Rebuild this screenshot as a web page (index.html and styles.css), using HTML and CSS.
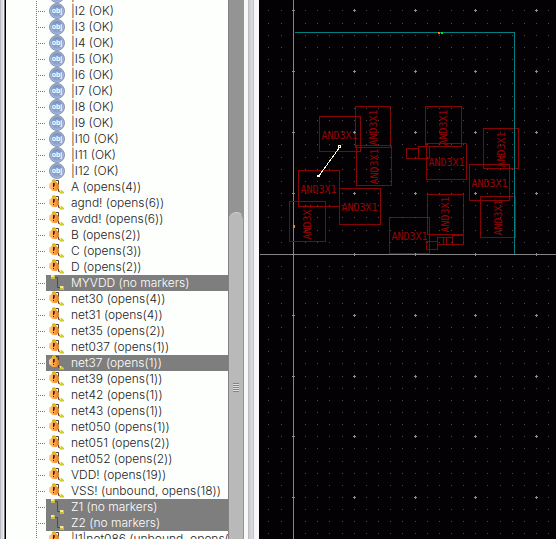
FILE: index.html
```
<!DOCTYPE html>
<html lang="en">
<head>
<meta charset="utf-8">
<title>Layout nets</title>
<link rel="stylesheet" href="styles.css">
</head>
<body>
<svg class="defs" aria-hidden="true">
  <defs>
    <radialGradient id="orb" cx="50%" cy="70%" r="65%"><stop offset="0" stop-color="#8fa5d3"/><stop offset=".7" stop-color="#869bc8"/><stop offset="1" stop-color="#6b7fa9"/></radialGradient>
    <linearGradient id="amber" x2="1" y2="0"><stop offset="0" stop-color="#ffcf90"/><stop offset=".5" stop-color="#fba640"/><stop offset="1" stop-color="#d98034"/></linearGradient>
    <symbol id="obj" viewBox="0 0 16 16">
      <circle cx="8" cy="8" r="7.5" fill="url(#orb)" stroke="#8b97b4"/>
      <circle cx="8" cy="8" r="6.4" fill="none" stroke="#b9c7e4" stroke-width=".8"/>
      <text class="obj-label" x="8" y="10" text-anchor="middle">obj</text>
    </symbol>
    <symbol id="net" viewBox="0 0 16 16">
      <path d="M4 2.5H8.5V12.500H13" fill="none" stroke="#4c4c48"/>
      <path d="M2 0h4v4H2zM11 11h4v4h-4z" fill="#c9bd3c"/>
      <path d="M2 0h3v2H2zM11 11h3v2h-3z" fill="#eee9a0"/>
    </symbol>
    <symbol id="open" viewBox="0 0 16 16">
      <path d="M6 1.500H9.500V12.500H12" fill="none" stroke="#4a4030"/>
      <path d="M3 2.500h4L10 5.500v4L7.500 12h-4L0 9V5z" fill="url(#amber)"/>
      <path d="M3 1l2-1 2 1v2H3z" fill="#c9bd3c"/>
      <path d="M4 4h1v4H4zM4 9h1v1H4z" fill="#30200c"/>
      <path d="M5 4h1v3H5z" fill="#7a4a1c"/>
      <path d="M10.500 11h2l2.500 2v1.500h-4.500z" fill="#d2c82c"/>
      <path d="M11 11h1v2h-1z" fill="#f2eca0"/>
    </symbol>
  </defs>
</svg>
<main class="window">
  <div class="frame"></div>
  <nav class="browser" aria-label="Nets and instances">
    <ul class="tree" id="tree"></ul>
  </nav>
  <div class="scroll"><div class="thumb"><span class="grip"></span></div></div>
  <div class="splitter"><span class="sash"></span></div>
  <section class="canvas" aria-label="Layout">
    <svg class="layout">
      <g transform="translate(-258.500 .5)" shape-rendering="crispEdges">
        <path class="axis" d="M293 -1V4000M259 254H4000"/>
        <g id="cells"></g>
        <g class="cell">
          <rect x="406" y="148" width="12" height="10"/><rect x="418" y="146" width="11" height="12"/>
          <rect x="426" y="241" width="11" height="8"/><rect x="437" y="237" width="15" height="7"/>
          <rect x="452" y="235" width="11" height="9"/><path d="M443 237v7M446 237v7"/>
        </g>
        <path class="boundary" d="M294 32H514V253"/>
        <g id="grid"></g>
        <path class="flight" d="M339 147L318 176"/>
        <rect class="end" x="338" y="145" width="2" height="2"/>
        <rect class="end" x="317" y="175" width="2" height="1"/>
        <path class="pin" d="M292.500 224.500h2v3h-2zM437.500 31.500h2v2h-2z"/>
        <path class="pin go" d="M440.500 31.500h2v2h-2z"/>
      </g>
    </svg>
  </section>
</main>
<script src="app.js"></script>
</body>
</html>
```
FILE: styles.css
```
* { box-sizing: border-box; }
body { margin: 0; background: #000; }
.defs { position: absolute; width: 0; height: 0; }
.window { display: flex; height: 100vh; overflow: hidden; }
.frame { flex: 0 0 6px; background: linear-gradient(90deg, #b9bcc4 0 1px, #d9dbe0 1px 3px, #f2f2f4 3px 4px, #777 4px 5px, #000 5px); }
.browser { flex: 0 0 222px; overflow: hidden; background: #fdfffd; }
.tree { list-style: none; margin: -13px 0 0 30px; padding: 0; font: 300 12px/16px Inter, sans-serif; color: #222; background: repeating-linear-gradient(#777 0 1px, transparent 1px 2px) 0 0 / 1px 100% no-repeat; }
.row { display: flex; height: 16px; white-space: pre; }
.twig { flex: 0 0 10px; background: repeating-linear-gradient(90deg, #777 0 1px, transparent 1px 2px) 0 8px / 100% 1px no-repeat; }
.item { display: flex; flex: 1; gap: 6px; padding-left: 3px; }
.item svg { flex: 0 0 16px; height: 16px; }
.selected { background: #7e7e7e; color: #fff; }
.obj-label { font: bold 7px "Liberation Sans", sans-serif; fill: #fff; }
.scroll { flex: 0 0 16px; padding-top: 212px; background: #949494; border-left: 1px solid #828282; }
.thumb { display: flex; align-items: center; justify-content: center; height: 100vh; padding-bottom: 188px; background: #b9b9b9; border: 1px solid #929292; border-top-color: #cfcfcf; border-left: 0; border-radius: 8px 8px 0 0; }
.grip { width: 6px; height: 9px; background: repeating-linear-gradient(#858585 0 1px, #dedede 1px 2px); }
.splitter { display: flex; flex: 0 0 15px; padding-left: 4px; background: #f8f8f8; }
.sash { width: 6px; background: linear-gradient(90deg, #b4b6bb, #cfd1d5 30%, #d8dade 70%, #b9bcc2); }
.canvas { flex: 1; min-width: 0; background: #030104; }
.layout { display: block; width: 100%; height: 100%; }
.axis { stroke: #848484; }
.cell { fill: none; stroke: #860404; }
.name { font: 10px "DejaVu Sans Mono", monospace; fill: #960404; stroke: none; }
.boundary { fill: none; stroke: #008080; }
.dot { fill: #4a4a4a; }
.plus { stroke: #8c8c8c; }
.flight { stroke: #ffffdc; }
.end { fill: #030104; stroke: #ffffdc; }
.pin { fill: #ff8000; }
.go { fill: #00f000; }
```
FILE: app.js
```
const nets = [
  ...Array.from({ length: 12 }, (_, i) => ["obj", `|I${i + 1} (OK)`]),
  ["open", "A (opens(4))"], ["open", "agnd! (opens(6))"], ["open", "avdd! (opens(6))"],
  ["open", "B (opens(2))"], ["open", "C (opens(3))"], ["open", "D (opens(2))"],
  ["net", "MYVDD (no markers)", true], ["open", "net30 (opens(4))"], ["open", "net31 (opens(4))"],
  ["open", "net35 (opens(2))"], ["open", "net037 (opens(1))"], ["open", "net37 (opens(1))", true],
  ["open", "net39 (opens(1))"], ["open", "net42 (opens(1))"], ["open", "net43 (opens(1))"],
  ["open", "net050 (opens(1))"], ["open", "net051 (opens(2))"], ["open", "net052 (opens(2))"],
  ["open", "VDD! (opens(19))"], ["open", "VSS! (unbound, opens(18))"],
  ["net", "Z1 (no markers)", true], ["net", "Z2 (no markers)", true],
  ["open", "|I1|net086 (unbound, opens(3))"]
];
document.getElementById("tree").innerHTML = nets.map(([icon, text, on]) =>
  `<li class="row"><span class="twig"></span><span class="item${on ? " selected" : ""}"><svg><use href="#${icon}"/></svg><span>${text}</span></span></li>`).join("");

// Cell outlines: left, top, right, bottom, label x, label baseline, rotated
const cells = [
  [319, 116, 360, 151, 321, 138], [355, 106, 390, 147, 376, 145, 1], [356, 145, 391, 185, 377, 184, 1],
  [298, 170, 339, 206, 300, 192], [289, 201, 325, 241, 310, 239, 1], [339, 188, 380, 224, 341, 210],
  [389, 217, 429, 253, 391, 239], [425, 106, 461, 146, 446, 145, 1], [426, 143, 466, 179, 428, 165],
  [483, 128, 518, 168, 504, 167, 1], [469, 164, 509, 200, 471, 186], [480, 196, 515, 237, 501, 235, 1],
  [427, 194, 463, 234, 448, 232, 1]
];
document.getElementById("cells").innerHTML = cells.map(([l, t, r, b, x, y, turned]) =>
  `<g class="cell"><rect x="${l}" y="${t}" width="${r - l}" height="${b - t}"/><text class="name" transform="translate(${x} ${y})${turned ? " rotate(-90)" : ""}">AND3X1</text></g>`).join("");

// Minor grid dots, with a cross at every fifth step from the origin
let grid = "";
for (let i = -2; i < 60; i++) {
  for (let j = -20; j < 60; j++) {
    const x = i === -2 ? 268 : Math.round(293 + i * 12.15);
    const y = Math.round(254 + j * (j < 0 ? 12.18 : 12.15));
    if (i % 5 === 0 && j % 5 === 0) grid += `<path class="plus" d="M${x - 1.5} ${y}h3M${x} ${y - 1.5}v3"/>`;
    else if (i !== 0 && j !== 0) grid += `<rect class="dot" x="${x - 0.5}" y="${y - 0.5}" width="1" height="1"/>`;
  }
}
document.getElementById("grid").innerHTML = grid;
```
